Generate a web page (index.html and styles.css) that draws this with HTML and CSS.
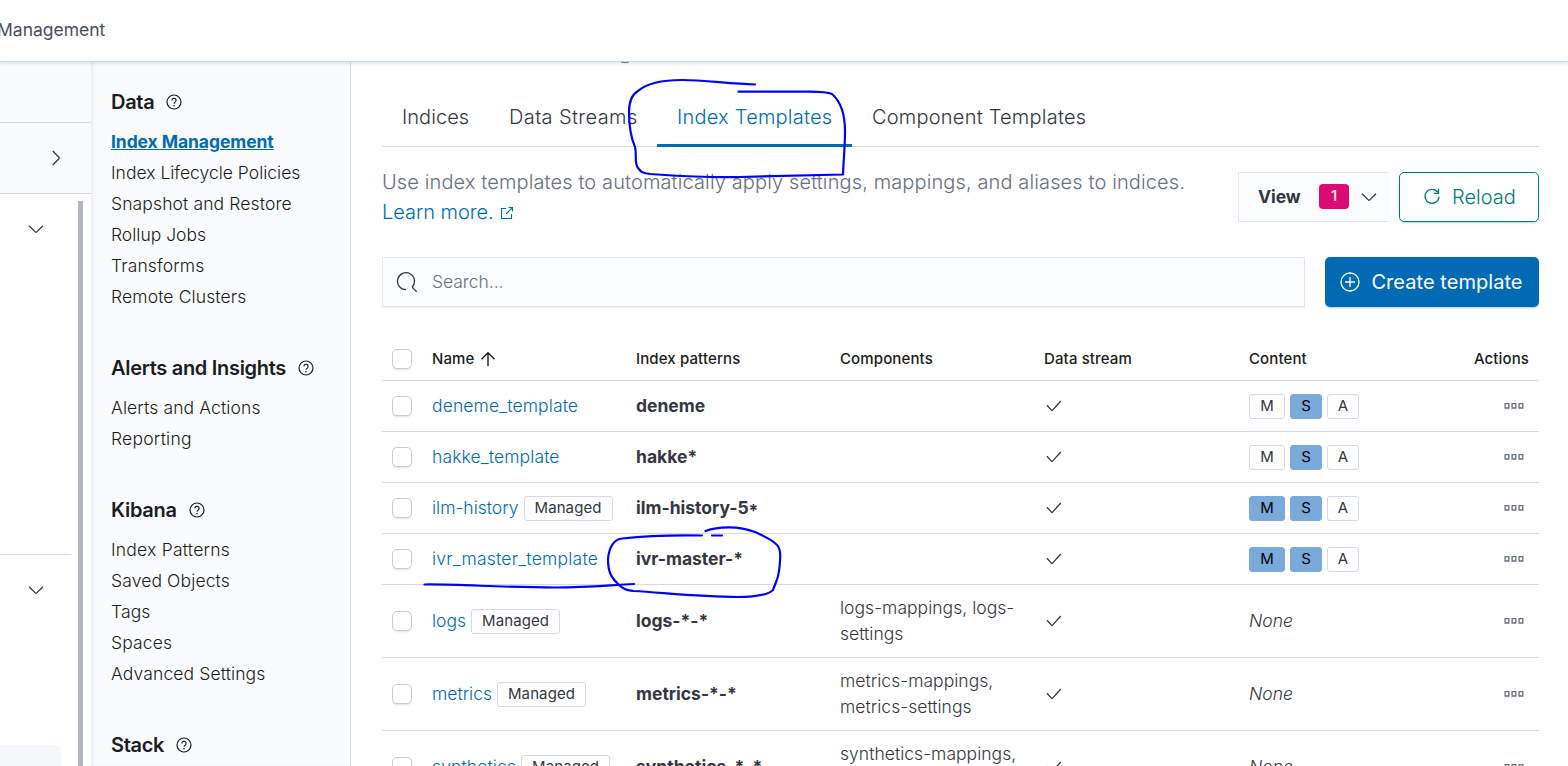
FILE: index.html
```
<!DOCTYPE html>
<html lang="en">
<head>
<meta charset="utf-8">
<title>Index Management</title>
<link rel="stylesheet" href="styles.css">
</head>
<body>
<svg class="defs" width="0" height="0">
  <symbol id="down" viewBox="0 0 20 20"><path d="M3 6.8l6.3 6.1a1 1 0 0 0 1.4 0L17 6.8"/></symbol>
  <symbol id="right" viewBox="0 0 20 20"><path d="M6.8 3l6.1 6.3a1 1 0 0 1 0 1.4L6.8 17"/></symbol>
  <symbol id="help" viewBox="0 0 16 16"><circle cx="8" cy="8" r="7"/><path d="M5.9 6.4a2.1 2.1 0 1 1 3.2 1.8c-.7.4-1.1.7-1.1 1.5"/><path d="M8 11v1.3" stroke-width="1.4"/></symbol>
  <symbol id="check" viewBox="0 0 20 20"><path d="M3 9.2l4.6 5.2a.5.5 0 0 0 .7 0L16.8 5"/></symbol>
  <symbol id="dots" viewBox="0 0 20 6"><path d="M1.1.6h3.7v4.4H1.100zM8.1.6h3.7v4.4H8.100zM15.1.6h3.7v4.4h-3.700z"/></symbol>
</svg>

<header class="header"><span class="crumb">Management</span></header>

<div class="shell">
  <aside class="dock">
    <div class="dock-home"></div>
    <div class="dock-recent"><svg class="icon"><use href="#right"/></svg></div>
    <div class="dock-scroll">
      <div class="dock-items">
        <div class="dock-group first"><svg class="icon"><use href="#down"/></svg></div>
        <div class="dock-group second"><svg class="icon"><use href="#down"/></svg></div>
        <div class="dock-active"></div>
      </div>
      <div class="dock-bar"></div>
    </div>
  </aside>

  <nav class="side">
    <section class="side-group">
      <h2>Data <svg class="help"><use href="#help"/></svg></h2>
      <a class="current">Index Management</a><a class="snug">Index Lifecycle Policies</a><a>Snapshot and Restore</a><a class="snug">Rollup Jobs</a><a>Transforms</a><a>Remote Clusters</a>
    </section>
    <section class="side-group">
      <h2>Alerts and Insights <svg class="help"><use href="#help"/></svg></h2>
      <a>Alerts and Actions</a><a class="loose">Reporting</a>
    </section>
    <section class="side-group">
      <h2>Kibana <svg class="help"><use href="#help"/></svg></h2>
      <a class="loose">Index Patterns</a><a>Saved Objects</a><a>Tags</a><a>Spaces</a><a>Advanced Settings</a>
    </section>
    <section class="side-group">
      <h2>Stack <svg class="help"><use href="#help"/></svg></h2>
    </section>
  </nav>

  <main class="main">
    <div class="tabs">
      <span class="tab t1">Indices</span><span class="tab t2">Data Streams</span><span class="tab t3 selected">Index Templates</span><span class="tab t4">Component Templates</span>
    </div>

    <div class="intro">
      <p>Use index templates to automatically apply settings, mappings, and aliases to indices.<br>
      <a>Learn more. <svg class="ext" viewBox="0 0 14 14"><path d="M6 2.5H1.500v10h10V8M8.500 1.500h4v4M12.500 1.500L6 8"/></svg></a></p>
      <div class="actions">
        <div class="view"><b>View</b><span class="count">1</span><svg class="icon"><use href="#down"/></svg></div>
        <button class="reload"><svg class="icon" viewBox="0 0 20 20"><path d="M15.7 5.2A7 7 0 1 0 17 9.7M16.500 1.800v4.600h-4.600"/></svg>Reload</button>
      </div>
    </div>

    <div class="toolbar">
      <div class="search"><svg class="glass" viewBox="0 0 22 22"><path d="M10 18.700a8.500 8.500 0 1 1 6.100-2.600M16.100 16.100l4.600 4.600"/></svg><span>Search...</span></div>
      <button class="create"><svg class="icon" viewBox="0 0 20 20"><circle cx="10" cy="10" r="9"/><path d="M10 5v10M5 10h10"/></svg>Create template</button>
    </div>

    <div class="table">
      <div class="row head"><i class="box"></i><span>Name <svg class="sort" viewBox="0 0 16 16"><path d="M8 15V1.800M1.500 8.300L8 1.700l6.500 6.600"/></svg></span><span>Index patterns</span><span>Components</span><span>Data stream</span><span>Content</span><span class="end">Actions</span></div>
      <div class="row"><i class="box"></i><span class="name"><a>deneme_template</a></span><b>deneme</b><span></span><svg class="icon"><use href="#check"/></svg><span class="tags"><em>M</em><em class="on">S</em><em>A</em></span><svg class="dots"><use href="#dots"/></svg></div>
      <div class="row"><i class="box"></i><span class="name"><a>hakke_template</a></span><b>hakke*</b><span></span><svg class="icon"><use href="#check"/></svg><span class="tags"><em>M</em><em class="on">S</em><em>A</em></span><svg class="dots"><use href="#dots"/></svg></div>
      <div class="row"><i class="box"></i><span class="name"><a class="snug">ilm-history</a><em class="managed">Managed</em></span><b>ilm-history-5<span class="star">*</span></b><span></span><svg class="icon"><use href="#check"/></svg><span class="tags"><em class="on">M</em><em class="on">S</em><em>A</em></span><svg class="dots"><use href="#dots"/></svg></div>
      <div class="row"><i class="box"></i><span class="name"><a class="loose">ivr_master_template</a></span><b>ivr-master-*</b><span></span><svg class="icon"><use href="#check"/></svg><span class="tags"><em class="on">M</em><em class="on">S</em><em>A</em></span><svg class="dots"><use href="#dots"/></svg></div>
      <div class="row tall"><i class="box"></i><span class="name"><a class="snug">logs</a><em class="managed">Managed</em></span><b>logs-*-*</b><span class="comp">logs-mappings, logs-<br>settings</span><svg class="icon"><use href="#check"/></svg><span class="none">None</span><svg class="dots"><use href="#dots"/></svg></div>
      <div class="row tall"><i class="box"></i><span class="name"><a class="snug">metrics</a><em class="managed">Managed</em></span><b>metrics-*-*</b><span class="comp">metrics-mappings,<br>metrics-settings</span><svg class="icon"><use href="#check"/></svg><span class="none">None</span><svg class="dots"><use href="#dots"/></svg></div>
      <div class="row tall"><i class="box"></i><span class="name"><a>synthetics</a><em class="managed">Managed</em></span><b>synthetics-*-*</b><span class="comp">synthetics-mappings,<br>synthetics-settings</span><svg class="icon"><use href="#check"/></svg><span class="none">None</span><svg class="dots"><use href="#dots"/></svg></div>
    </div>
  </main>
</div>

<svg class="ink" viewBox="0 0 1568 766">
  <path class="title-edge" d="M621.5 62.3Q625 63 628.5 62.3"/>
  <path d="M755 84.5C730 84 705 80 682 80C660 80 646 84 638 91C631 95 629 102 629 112C629 128 632 140 635 147C637 154 634 163 638 168C641 172 642 173 650 174C680 176 705 178 740 177C780 176 815 175 843 174.500C843.500 160 845 148 845 131C845 113 840 101 832 94C826 91 812 91.500 800 91.700L738.500 91.700"/>
  <path d="M702 535.500C680 535 645 536 622 538.500C615 539 609 546 608 559C608 572 611 577 618 584C624 590 627 590 634 591C666 593 702 597 737 597C755 597 768 595 773 590C776 581 778 580 779 571C781 556 781 548 776 544C771 539 763 536 755 532C739 526 719 526 705.500 531M712 535.500H722"/>
  <path d="M424.500 584.500C460 584 500 587.500 555 587.500C590 587.500 610 585 634 584"/>
</svg>
</body>
</html>
```
FILE: styles.css
```
* { box-sizing: border-box; }
body { margin: 0; width: 1568px; height: 766px; overflow: hidden; background: #fff; color: #343741; font: 400 17.5px/26px Inter, "Liberation Sans", sans-serif; letter-spacing: 0; position: relative; }
svg { fill: none; stroke: currentColor; flex: none; }
.defs { position: absolute; }
.icon { width: 20px; height: 20px; stroke-width: 1.3; }
a { color: #006bb4; font-weight: 300; letter-spacing: 0.12px; }
a.snug { letter-spacing: 0; }
a.loose { letter-spacing: 0.23px; }
button { font: inherit; letter-spacing: inherit; }

.header { height: 62px; border-bottom: 1px solid #d3dae6; background: #fff; box-shadow: 0 2px 3px rgba(152,162,179,.25); display: flex; align-items: center; position: relative; z-index: 1; }
.crumb { margin-left: -3px; padding-bottom: 2px; color: #4a4e59; }
.shell { display: flex; height: 704px; }

.dock { width: 91px; display: flex; flex-direction: column; }
.dock-home { height: 61px; background: #fafbfd; border-bottom: 1px solid #d3dae6; }
.dock-recent { height: 71px; background: #fafbfd; border-bottom: 1px solid #d3dae6; padding: 25px 0 0 46px; }
.dock-scroll { flex: 1; display: flex; justify-content: space-between; }
.dock-items { width: 71px; display: flex; flex-direction: column; }
.dock-group { padding: 25px 0 0 26px; }
.first { height: 361px; border-bottom: 1px solid #d3dae6; }
.second { height: 190px; }
.dock-active { width: 61px; height: 21px; background: #f5f7fa; border-top-right-radius: 5px; }
.dock-bar { width: 5px; margin: 7px 8px 0 0; background: #b2b5be; }

.side { width: 260px; background: #fafbfd; border-right: 1px solid #d3dae6; padding: 25px 0 0 20px; box-shadow: inset 3px 0 4px -2px rgba(152,162,179,.25); color: #1a1c21; }
.side-group { display: flex; flex-direction: column; margin-bottom: 41px; }
.side h2 { margin: 0 0 9px; font-size: 20px; line-height: 30px; font-weight: 600; letter-spacing: -0.3px; display: flex; align-items: center; gap: 12px; }
.side a { color: inherit; line-height: 31px; }
.side .current { color: #006bb4; font-weight: 700; text-decoration: underline; letter-spacing: -0.08px; }
.help { width: 16px; height: 16px; stroke-width: 1.2; }

.main { flex: 1; padding: 24px 29px 0 31px; }
.tabs { display: flex; height: 61px; border-bottom: 1px solid #d3dae6; font-size: 20px; font-weight: 300; line-height: 62px; letter-spacing: 0.22px; }
.tab { height: 61px; padding-left: 20px; white-space: nowrap; }
.t1 { width: 107px; letter-spacing: 0.05px; }
.t2 { width: 168px; letter-spacing: 0.38px; }
.t3 { width: 195px; }
.selected { color: #006bb4; border-bottom: 3px solid #006bb4; }
.intro { display: flex; justify-content: space-between; padding-top: 20px; }
.intro p { margin: 0; font-size: 20px; font-weight: 300; line-height: 30px; color: #69707d; white-space: nowrap; letter-spacing: 0.12px; }
.intro a { letter-spacing: -0.05px; }
.ext { width: 14px; height: 14px; stroke-width: 1.1; margin-left: 1px; vertical-align: -1px; }
.actions { display: flex; gap: 10px; padding-top: 5px; }
.view { width: 151px; height: 50px; background: #fbfcfd; border: 1px solid #e3e6ee; border-right: 0; display: flex; align-items: center; padding-left: 19px; letter-spacing: -0.09px; }
.view b { width: 61px; }
.count { width: 30px; height: 25px; margin: -1px 10px 0 0; border-radius: 4px; background: #dd0a73; color: #fff; font-size: 15px; line-height: 24px; text-align: center; font-weight: 500; }
.reload { width: 140px; height: 50px; border: 1px solid #017d73; border-radius: 5px; background: #fff; color: #017d73; font-size: 20px; font-weight: 300; display: flex; align-items: center; justify-content: center; gap: 10px; box-shadow: 0 2px 2px -1px rgba(1,125,115,.3); padding: 0; }
.toolbar { display: flex; gap: 20px; padding-top: 30px; }
.search { width: 923px; height: 50px; background: #fbfcfd; border: 1px solid #e3e6ee; display: flex; align-items: center; gap: 14px; padding-left: 13px; font-weight: 300; color: #69707d; letter-spacing: -0.05px; box-shadow: 0 2px 2px -1px rgba(152,162,179,.2); }
.glass { width: 22px; height: 22px; color: #343741; stroke-width: 1.3; }
.create { width: 214px; height: 50px; border: 0; border-radius: 5px; background: #006bb4; color: #fff; font-size: 20px; letter-spacing: 0.05px; display: flex; align-items: center; justify-content: center; gap: 11px; padding: 0 1px 0 0; white-space: nowrap; box-shadow: 0 2px 2px -1px rgba(0,107,180,.3); }

.table { padding-top: 31px; }
.row { display: grid; grid-template-columns: 50px 204px 204px 204px 205px 190px 1fr; align-items: center; height: 51px; border-bottom: 1px solid #d3dae6; white-space: nowrap; }
.head { height: 43px; font-size: 15px; font-weight: 500; color: #1a1c21; letter-spacing: 0.12px; }
.tall { height: 73px; }
.row b { font-weight: 700; }
.end { text-align: right; padding-right: 10px; }
.box { width: 20px; height: 20px; margin-left: 10px; border: 1px solid #c9cbcd; border-radius: 5px; background: #fff; box-shadow: 0 2px 2px -1px rgba(152,162,179,.3); }
.sort { width: 16px; height: 16px; stroke-width: 1.4; margin-left: 1px; vertical-align: -3px; }
.name { display: flex; align-items: center; gap: 5px; }
.comp { font-weight: 300; letter-spacing: 0.03px; }
.none { font-weight: 300; font-style: italic; }
.star { position: relative; top: 3px; }
.tags { display: flex; gap: 5px; }
em { font-style: normal; }
.tags em, .managed { height: 25px; border: 1px solid #d3dae6; border-radius: 3px; font-size: 15px; line-height: 22px; text-align: center; letter-spacing: 0.1px; }
.tags em { width: 32px; }
.tags em:first-child { width: 36px; }
.tags .on { background: #79aad9; border-color: #79aad9; color: #000; }
.managed { width: 89px; }
.dots { width: 20px; height: 6px; justify-self: end; margin-right: 15px; color: #69707d; stroke-width: 1.3; }
.ink { position: absolute; left: 0; top: 0; width: 1568px; height: 766px; z-index: 2; color: #0000fa; stroke-width: 2.2; stroke-linecap: round; stroke-linejoin: round; pointer-events: none; }
.title-edge { color: #69707d; stroke-width: 1; }
```
